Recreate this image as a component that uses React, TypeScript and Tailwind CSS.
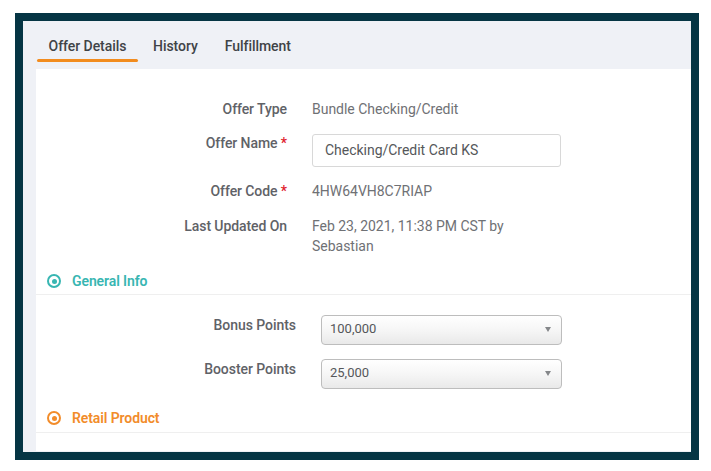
const font = "font-['Roboto',sans-serif]";

function Row({ label, required, children, className }: { label: string; required?: boolean; children: React.ReactNode; className?: string }) {
  return (
    <div className={`flex ${className ?? ""}`}>
      <div className="w-[251px] shrink-0 text-right text-[14px] leading-[20px] font-medium tracking-[-0.08px] text-[#5f6267]">
        {label}
        {required && <span className="text-[#e0202c]"> *</span>}
      </div>
      <div className="ml-[25px] text-[14px] leading-[20px] tracking-[-0.02px] text-[#6f7175]">{children}</div>
    </div>
  );
}

function SelectBox({ value }: { value: string }) {
  return (
    <div className="flex h-[30px] w-[241px] items-center justify-between rounded-[4px] border border-[#bdbdbd] bg-gradient-to-b from-[#ffffff] via-[#f6f6f6] to-[#e9e9e9] pl-[8px] pr-[10px] text-[13px] text-[#55575a]">
      <span className="-translate-y-px">{value}</span>
      <span className="h-0 w-0 -translate-y-px border-x-[3px] border-t-[5px] border-x-transparent border-t-[#85878a]" />
    </div>
  );
}

function SectionHead({ label, textClass, borderClass, dotClass }: { label: string; textClass: string; borderClass: string; dotClass: string }) {
  return (
    <div className="flex items-center gap-[11px] pl-[11px]">
      <span className={`flex h-[14px] w-[14px] items-center justify-center rounded-full border-2 ${borderClass}`}>
        <span className={`h-[5px] w-[5px] rounded-full ${dotClass}`} />
      </span>
      <span className={`text-[14px] leading-[20px] font-semibold tracking-[-0.1px] ${textClass}`}>{label}</span>
    </div>
  );
}

function Tab({ label, active, className }: { label: string; active?: boolean; className?: string }) {
  return (
    <div className={`pt-[15px] ${className ?? ""}`}>
      <div className="pb-[3px] text-center text-[14px] leading-[20px] font-medium tracking-[-0.05px] text-[#3f4347]">{label}</div>
      <div className={`h-[3px] rounded-[2px] ${active ? "bg-[#f28c1e]" : ""}`} />
    </div>
  );
}

export default function App() {
  return (
    <div className={`h-[471px] w-[711px] bg-white pl-[15px] pt-[13px] ${font}`}>
      <div className="h-[447px] w-[684px] border-[8px] border-[#053544] bg-[#eff1f6]">
        <div className="flex h-[48px] items-start pl-[14px]">
          <Tab label="Offer Details" active className="w-[101px]" />
          <Tab label="History" className="ml-[15px]" />
          <Tab label="Fulfillment" className="ml-[27px]" />
        </div>
        <div className="ml-[13px] h-[382px] bg-white">
          <div className="pt-[30px]">
            <Row label="Offer Type" className="h-[34px]">Bundle Checking/Credit</Row>
            <Row label="Offer Name" required className="h-[48px]">
              <div className="mt-px h-[33px] w-[249px] rounded-[3px] border border-[#d8d8d8] bg-white pl-[12px] pt-[5px] text-[#55575a]">Checking/Credit Card KS</div>
            </Row>
            <Row label="Offer Code" required className="h-[35px]">4HW64VH8C7RIAP</Row>
            <Row label="Last Updated On">
              <div className="w-[215px]">Feb 23, 2021, 11:38 PM CST by Sebastian</div>
            </Row>
          </div>
          <div className="mt-[15px]"><SectionHead label="General Info" textClass="text-[#38b6b2]" borderClass="border-[#38b6b2]" dotClass="bg-[#38b6b2]" /></div>
          <div className="mt-[3px] border-t border-[#efefef] pt-[20px]">
            <div className="flex h-[44px]">
              <div className="w-[260px] text-right text-[14px] leading-[20px] font-medium tracking-[-0.05px] text-[#5f6267]">Bonus Points</div>
              <div className="ml-[25px]"><SelectBox value="100,000" /></div>
            </div>
            <div className="flex h-[44px]">
              <div className="w-[260px] text-right text-[14px] leading-[20px] font-medium tracking-[-0.05px] text-[#5f6267]">Booster Points</div>
              <div className="ml-[25px]"><SelectBox value="25,000" /></div>
            </div>
          </div>
          <div className="mt-[5px]"><SectionHead label="Retail Product" textClass="text-[#f28c2a]" borderClass="border-[#f28c2a]" dotClass="bg-[#f28c2a]" /></div>
          <div className="mt-[4px] border-t border-[#efefef]" />
        </div>
      </div>
    </div>
  );
}
